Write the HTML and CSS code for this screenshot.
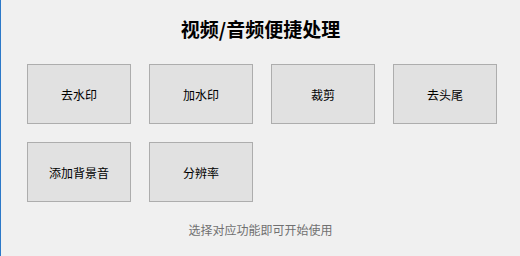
FILE: index.html
```html
<!DOCTYPE html>
<html lang="zh-CN">
<head>
    <meta charset="UTF-8">
    <meta name="viewport" content="width=device-width, initial-scale=1.0">
    <title>视频/音频便捷处理</title>
    <link rel="stylesheet" href="styles.css">
</head>
<body>
    <div class="window">
        <h1 class="title">视频/音频便捷处理</h1>
        <div class="tool-grid">
            <button class="tool-button">去水印</button>
            <button class="tool-button">加水印</button>
            <button class="tool-button">裁剪</button>
            <button class="tool-button">去头尾</button>
            <button class="tool-button">添加背景音</button>
            <button class="tool-button">分辨率</button>
        </div>
        <p class="hint">选择对应功能即可开始使用</p>
    </div>
</body>
</html>
```

FILE: styles.css
```css
html, body {
    margin: 0;
    height: 100%;
}

body {
    font-family: "Noto Sans CJK SC", "Noto Sans", sans-serif;
    background-color: #f0f0f0;
    color: #000;
}

.window {
    box-sizing: border-box;
    height: 256px;
    border-left: 1px solid #2b78c8;
    padding: 0 0 0 26px;
}

.title {
    margin: 0;
    padding-top: 16px;
    height: 64px;
    box-sizing: border-box;
    font-size: 19px;
    line-height: 26px;
    font-weight: bold;
    text-align: center;
    padding-right: 26px;
}

.tool-grid {
    display: grid;
    grid-template-columns: repeat(4, 104px);
    grid-auto-rows: 60px;
    gap: 18px;
}

.tool-button {
    font-family: inherit;
    font-size: 12px;
    color: #000;
    background-color: #e1e1e1;
    border: 1px solid #adadad;
    border-radius: 0;
    padding: 0;
    cursor: pointer;
}

.tool-button:hover {
    background-color: #e5f1fb;
    border-color: #0078d7;
}

.hint {
    margin: 0;
    padding-top: 20px;
    padding-right: 26px;
    font-size: 12px;
    line-height: 16px;
    color: #707070;
    text-align: center;
}
```
